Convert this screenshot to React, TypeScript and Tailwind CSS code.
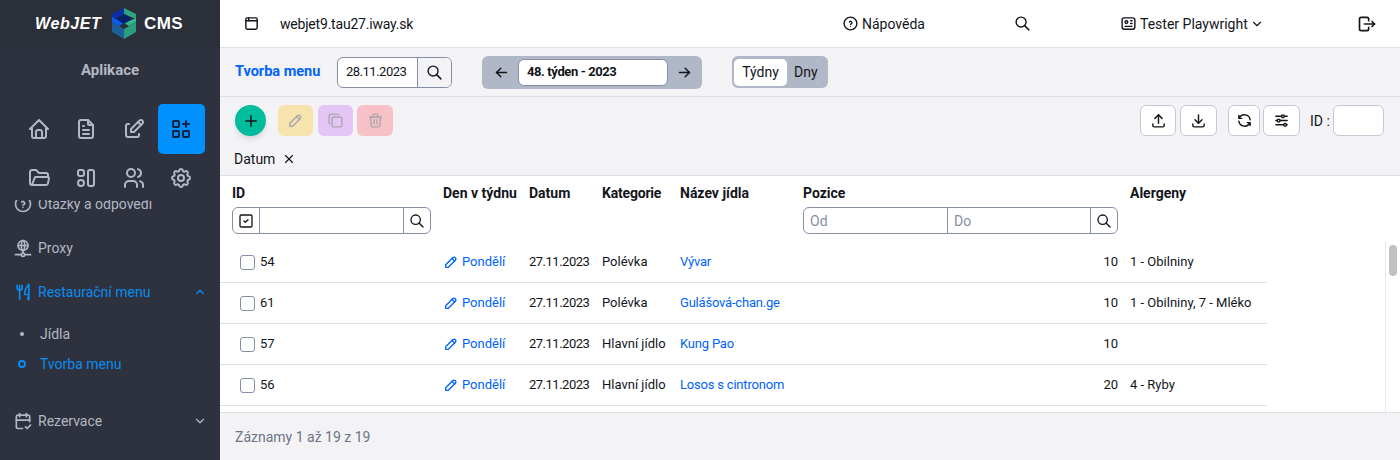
import React from 'react';
import {
  TbHome, TbFileText, TbEdit, TbApps, TbFolderOpen, TbUsers, TbSettings, TbHelpCircle, TbNetwork,
  TbToolsKitchen2, TbCalendarCheck, TbChevronUp, TbChevronDown, TbBrowser, TbSearch, TbId, TbLogout,
  TbArrowLeft, TbArrowRight, TbPlus, TbPencil, TbCopy, TbTrash, TbUpload, TbDownload, TbRefresh,
  TbAdjustmentsHorizontal, TbX, TbSquareCheck,
} from 'react-icons/tb';

const FONT = "font-['Roboto',sans-serif]";

const rows = [
  { id: '54', cat: 'Polévka', name: 'Vývar', pos: '10', alg: '1 - Obilniny' },
  { id: '61', cat: 'Polévka', name: 'Gulášová-chan.ge', pos: '10', alg: '1 - Obilniny, 7 - Mléko' },
  { id: '57', cat: 'Hlavní jídlo', name: 'Kung Pao', pos: '10', alg: '' },
  { id: '56', cat: 'Hlavní jídlo', name: 'Losos s cintronom', pos: '20', alg: '4 - Ryby' },
];

const COLS = 'grid grid-cols-[211px_86px_73px_78px_123px_327px_149px]';

const Logo = () => (
  <svg width="26" height="31" viewBox="0 0 26 31" className="shrink-0">
    <polygon points="13,0 25,6 25,11 13,6" fill="#2aa57f" />
    <polygon points="13,0 1,6 1,12 13,6" fill="#0a2fa8" />
    <polygon points="1,9 13,15 8,18 1,14" fill="#0b5cf0" />
    <polygon points="25,10 13,15 18,18 25,14" fill="#34b58a" />
    <polygon points="13,6 21,11 13,16 5,11" fill="#07206b" />
    <polygon points="1,14 13,21 13,31 1,24" fill="#1a5f9a" />
    <polygon points="25,14 13,21 13,31 25,24" fill="#2c9c7e" />
  </svg>
);

const ToolsIcon = () => (
  <svg width="24" height="24" viewBox="0 0 24 24" fill="none" stroke="currentColor" strokeWidth="2">
    <rect x="4" y="4" width="6" height="6" rx="2" />
    <circle cx="7" cy="17" r="3" />
    <rect x="14" y="4" width="6" height="16" rx="2" />
  </svg>
);

const Sidebar = () => (
  <aside className="w-[220px] shrink-0 bg-[#2d323e] flex flex-col overflow-hidden text-[#b4b8c4]">
    <div className="h-[47px] shrink-0 bg-[#2a2f3a] flex items-center pl-[35px]">
      <span className="w-[76px] font-['Liberation_Sans',sans-serif] font-bold italic text-[16px] text-white tracking-[0.6px]">WebJET</span>
      <Logo />
      <span className="pl-[7px] font-['Liberation_Sans',sans-serif] font-bold text-[17px] text-white tracking-[0.4px]">CMS</span>
    </div>
    <div className="h-[57px] shrink-0 flex items-center justify-center pb-[10px] text-[15px] font-bold">Aplikace</div>
    <div className="ml-[15px] grid grid-cols-[repeat(4,47.5px)] grid-rows-[50px_46px] justify-items-center shrink-0">
      <div className="self-center"><TbHome size={24} /></div>
      <div className="self-center"><TbFileText size={24} /></div>
      <div className="self-center"><TbEdit size={24} /></div>
      <div className="w-[47px] h-[50px] rounded-[5px] bg-[#0091ff] text-[#10233f] flex items-center justify-center"><TbApps size={24} /></div>
      <div className="mt-3"><TbFolderOpen size={24} /></div>
      <div className="mt-3"><ToolsIcon /></div>
      <div className="mt-3"><TbUsers size={24} /></div>
      <div className="mt-3"><TbSettings size={24} /></div>
    </div>
    <nav className="flex-1 overflow-hidden text-sm">
      <div className="-mt-[7px] h-[22px] flex items-center pl-[13px] gap-[5px]"><TbHelpCircle size={20} /><span>Otázky a odpovědi</span></div>
      <div className="mt-[11px] h-[44px] flex items-center pl-[13px] gap-[5px]"><TbNetwork size={20} /><span>Proxy</span></div>
      <div className="h-[44px] flex items-center pl-[13px] gap-[5px] text-[#0a8cf0]">
        <TbToolsKitchen2 size={20} /><span className="flex-1">Restaurační menu</span><TbChevronUp size={14} className="mr-[13px]" />
      </div>
      <div className="mt-[5px] h-[30px] flex items-center pl-[20px]"><span className="w-[4px] h-[4px] rounded-full bg-[#b4b8c4]" /><span className="ml-[16px]">Jídla</span></div>
      <div className="h-[30px] flex items-center pl-[18px] text-[#0a8cf0]"><span className="w-[8px] h-[8px] rounded-full border-2 border-[#0a8cf0]" /><span className="ml-[14px]">Tvorba menu</span></div>
      <div className="mt-[20px] h-[44px] flex items-center pl-[13px] gap-[5px]">
        <TbCalendarCheck size={20} /><span className="flex-1">Rezervace</span><TbChevronDown size={14} className="mr-[13px]" />
      </div>
    </nav>
  </aside>
);

const Header = () => (
  <header className="h-[48px] shrink-0 bg-white border-b border-[#dddfe6] flex items-center text-sm text-[#13151b]">
    <TbBrowser size={17} className="ml-[23px]" />
    <span className="ml-[20px] w-[562px] tracking-[-0.2px]">webjet9.tau27.iway.sk</span>
    <TbHelpCircle size={17} />
    <span className="ml-[3px] w-[152px]">Nápověda</span>
    <TbSearch size={17} className="w-[17px]" />
    <div className="ml-[89px] w-[237px] flex items-center">
      <TbId size={17} />
      <span className="ml-[3px]">Tester Playwright</span>
      <TbChevronDown size={14} className="ml-[2px]" />
    </div>
    <TbLogout size={20} />
  </header>
);

const Toolbar = () => (
  <div className="h-[49px] shrink-0 border-b border-[#dddfe6] flex items-center pl-[15px] text-sm text-[#13151b]">
    <span className="w-[102px] font-bold text-[14.5px] text-[#0063fb]">Tvorba menu</span>
    <div className="h-[31px] w-[115px] bg-white border border-[#868ea5] rounded-[6px] flex items-center overflow-hidden">
      <span className="flex-1 pl-2 text-[13px] tracking-[-0.5px]">28.11.2023</span>
      <span className="w-[34px] h-full bg-[#f3f3f6] border-l border-[#868ea5] flex items-center justify-center"><TbSearch size={17} /></span>
    </div>
    <div className="ml-[30px] w-[220px] h-[33px] bg-[#b0b7c6] rounded-[6px] flex items-center">
      <TbArrowLeft size={17} className="ml-[11px]" />
      <div className="ml-[8px] h-[27px] w-[150px] bg-white rounded-[6px] border border-[#868ea5] pl-2 flex items-center text-[13px] font-bold tracking-[-0.4px]">48. týden - 2023</div>
      <TbArrowRight size={17} className="ml-[8px]" />
    </div>
    <div className="ml-[30px] w-[96px] h-[32px] bg-[#b0b7c6] rounded-[6px] flex items-center pl-[2px]">
      <span className="h-[27px] w-[53px] bg-white rounded-[5px] flex items-center justify-center">Týdny</span>
      <span className="ml-[7px]">Dny</span>
    </div>
  </div>
);

const ActionBtn = ({ children, className }: { children: React.ReactNode; className: string }) => (
  <div className={`h-[31px] rounded-[6px] flex items-center justify-center text-[#a9a9ae] ${className}`}>{children}</div>
);

const OutlineBtn = ({ children, className }: { children: React.ReactNode; className: string }) => (
  <div className={`h-[31px] bg-white border border-[#c5c9d6] rounded-[6px] flex items-center justify-center text-[#13151b] ${className}`}>{children}</div>
);

const Actions = () => (
  <div className="h-[79px] shrink-0 border-b border-[#dddfe6] pl-[15px] pt-[8px]">
    <div className="flex items-center text-[#13151b]">
      <div className="w-[31px] h-[31px] rounded-full bg-[#00bd9d] shadow-md flex items-center justify-center"><TbPlus size={18} /></div>
      <ActionBtn className="ml-[12px] w-[35px] bg-[#f6e3ae]"><TbPencil size={17} /></ActionBtn>
      <ActionBtn className="ml-[5px] w-[35px] bg-[#e4c5f5]"><TbCopy size={17} /></ActionBtn>
      <ActionBtn className="ml-[4px] w-[36px] bg-[#f8c1c7]"><TbTrash size={17} /></ActionBtn>
      <OutlineBtn className="ml-[747px] w-[36px]"><TbUpload size={17} /></OutlineBtn>
      <OutlineBtn className="ml-[4px] w-[37px]"><TbDownload size={17} /></OutlineBtn>
      <OutlineBtn className="ml-[11px] w-[32px]"><TbRefresh size={17} /></OutlineBtn>
      <OutlineBtn className="ml-[3px] w-[37px]"><TbAdjustmentsHorizontal size={17} /></OutlineBtn>
      <span className="ml-[10px] text-sm">ID :</span>
      <div className="ml-[3px] w-[51px] h-[31px] bg-white border border-[#c5c9d6] rounded-[6px]" />
    </div>
    <div className="mt-[13px] -ml-px flex items-center text-sm text-[#13151b]">
      <span>Datum</span>
      <TbX size={14} className="ml-[7px]" />
    </div>
  </div>
);

const HeaderRow = () => (
  <div className={`${COLS} h-[66px] shrink-0 text-sm font-bold text-[#13151b] pt-[9px]`}>
    <div className="pl-3">
      <div className="h-[16px] leading-[16px]">ID</div>
      <div className="mt-[6px] w-[199px] h-[27px] border border-[#868ea5] rounded-[6px] flex items-center font-normal">
        <span className="w-[27px] h-full border-r border-[#868ea5] flex items-center justify-center"><TbSquareCheck size={16} /></span>
        <span className="flex-1" />
        <span className="w-[27px] h-full border-l border-[#868ea5] flex items-center justify-center"><TbSearch size={16} /></span>
      </div>
    </div>
    <div className="pl-3 h-[16px] leading-[16px]">Den v týdnu</div>
    <div className="pl-3 h-[16px] leading-[16px]">Datum</div>
    <div className="pl-3 h-[16px] leading-[16px] tracking-[-0.2px]">Kategorie</div>
    <div className="pl-3 h-[16px] leading-[16px]">Název jídla</div>
    <div className="pl-3">
      <div className="h-[16px] leading-[16px]">Pozice</div>
      <div className="mt-[6px] h-[27px] border border-[#868ea5] rounded-[6px] flex items-center font-normal text-[#868ea5]">
        <span className="w-[144px] pl-[6px] h-full flex items-center border-r border-[#868ea5]">Od</span>
        <span className="flex-1 pl-[6px]">Do</span>
        <span className="w-[27px] h-full border-l border-[#868ea5] flex items-center justify-center text-[#13151b]"><TbSearch size={16} /></span>
      </div>
    </div>
    <div className="pl-3 h-[16px] leading-[16px]">Alergeny</div>
  </div>
);

const Row = ({ id, cat, name, pos, alg }: (typeof rows)[number]) => (
  <div className={`${COLS} h-[41px] items-center border-b border-[#dddfe6] text-[13px] text-[#13151b]`}>
    <div className="pl-5 flex items-center">
      <span className="w-[15px] h-[15px] bg-white border border-[#868ea5] rounded-[3px]" />
      <span className="ml-[5px]">{id}</span>
    </div>
    <div className="pl-3 flex items-center text-[#0063fb]"><TbPencil size={16} /><span className="ml-[3px]">Pondělí</span></div>
    <div className="pl-3 tracking-[-0.5px]">27.11.2023</div>
    <div className="pl-3">{cat}</div>
    <div className="pl-3 text-[#0063fb] tracking-[-0.2px]">{name}</div>
    <div className="text-right">{pos}</div>
    <div className="pl-3">{alg}</div>
  </div>
);

export default function App() {
  return (
    <div className={`${FONT} flex h-screen overflow-hidden bg-[#f3f3f6]`}>
      <Sidebar />
      <main className="flex-1 min-w-0 flex flex-col">
        <Header />
        <Toolbar />
        <Actions />
        <section className="h-[237px] shrink-0 bg-white border-b border-[#dddfe6] flex flex-col overflow-hidden">
          <HeaderRow />
          <div className="flex-1 flex min-h-0">
            <div className="w-[1047px] overflow-hidden">
              {rows.map((r) => <Row key={r.id} {...r} />)}
            </div>
            <div className="ml-[118px] w-[15px] border-l border-[#e6e7ec] pl-[3px] pt-[3px]">
              <div className="w-[8px] h-[31px] rounded-full bg-[#c1c1c1]" />
            </div>
          </div>
        </section>
        <footer className="flex-1 flex items-center pl-[15px] text-sm text-[#6d7385]">Záznamy 1 až 19 z 19</footer>
      </main>
    </div>
  );
}
